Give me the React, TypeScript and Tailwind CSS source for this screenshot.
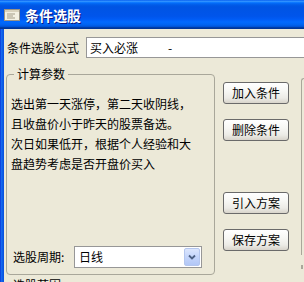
import React from 'react';

const titleBg =
  'bg-[linear-gradient(to_bottom,#0058ee_0%,#3593ff_4%,#288eff_6%,#127dff_8%,#036ffc_10%,#0262ee_14%,#0057e5_20%,#0054e3_24%,#0055eb_56%,#005bf5_66%,#026afe_76%,#0062ef_86%,#0052d6_92%,#0040ab_94%,#003092_100%)]';

const XpButton: React.FC<{ label: string; className?: string }> = ({ label, className = '' }) => (
  <button
    className={`flex h-[22px] w-[66px] items-center justify-center rounded-[3px] border border-[#6a6a6a] bg-[linear-gradient(to_bottom,#ffffff_0%,#f7f7f4_40%,#ecebe6_75%,#d8d4cb_100%)] text-[12px] leading-none text-black ${className}`}
  >
    {label}
  </button>
);

const WindowIcon: React.FC = () => (
  <svg width="16" height="12" viewBox="0 0 16 12" className="shrink-0">
    <rect x="0.5" y="0.5" width="15" height="11" fill="#f3f0e2" stroke="#9a9486" />
    <rect x="1" y="1" width="14" height="2" fill="#d9d2bd" />
    <line x1="3" y1="5" x2="11" y2="5" stroke="#a39c88" />
    <line x1="3" y1="7" x2="9" y2="7" stroke="#a39c88" />
    <line x1="3" y1="9" x2="11" y2="9" stroke="#a39c88" />
  </svg>
);

export default function App() {
  return (
    <div className="flex h-[282px] w-[304px] flex-col overflow-hidden font-['SimSun','Noto_Sans_CJK_SC',sans-serif] text-[12px] text-black">
      {/* Title bar */}
      <div className={`flex h-[29px] shrink-0 items-center gap-[5px] pl-[4px] ${titleBg}`}>
        <WindowIcon />
        <span className="text-[14px] font-bold leading-none text-white [text-shadow:1px_1px_0_#0a1883]">
          条件选股
        </span>
      </div>

      <div className="flex min-h-0 flex-1">
        {/* Window frame */}
        <div className="w-[4px] shrink-0 bg-[linear-gradient(to_right,#0831d9_0%,#166aee_35%,#0a5ae6_70%,#0850dc_100%)]" />

        <div className="flex flex-1 flex-col bg-[#ece9d8]">
          {/* Formula row */}
          <div className="mt-[8px] flex h-[21px] items-center">
            <span className="w-[82px] shrink-0 pl-[3px] leading-none">条件选股公式</span>
            <div className="flex h-[21px] flex-1 items-center border border-r-0 border-[#979797] bg-white pl-[3px] leading-none">
              <span>买入必涨</span>
              <span className="ml-[30px]">-</span>
            </div>
          </div>

          {/* Main area */}
          <div className="mt-[16px] flex items-start">
            <div className="relative ml-[2px] flex h-[201px] w-[209px] shrink-0 flex-col rounded-[4px] border border-[#a9a79a]">
              <span className="absolute -top-[7px] left-[7px] bg-[#ece9d8] px-[3px] leading-[12px]">计算参数</span>
              <div className="pl-[4px] pt-[19px] leading-[20px]">
                <div>选出第一天涨停，第二天收阴线，</div>
                <div>且收盘价小于昨天的股票备选。</div>
                <div>次日如果低开，根据个人经验和大</div>
                <div>盘趋势考虑是否开盘价买入</div>
              </div>
              <div className="mt-auto mb-[6px] flex items-center pl-[6px]">
                <span className="w-[61px] shrink-0 leading-none">选股周期:</span>
                <div className="flex h-[22px] w-[128px] items-center border border-[#979797] bg-white">
                  <span className="flex-1 pl-[4px] leading-none">日线</span>
                  <div className="mr-[1px] flex h-[18px] w-[16px] items-center justify-center rounded-[2px] border border-[#b4c6ee] bg-[linear-gradient(to_bottom,#dce6fd_0%,#c4d5fb_50%,#b2c7f6_100%)]">
                    <svg width="8" height="6" viewBox="0 0 8 6">
                      <path d="M1 1.5 L4 4.5 L7 1.5" fill="none" stroke="#4d6185" strokeWidth="1.8" />
                    </svg>
                  </div>
                </div>
              </div>
            </div>

            {/* Buttons */}
            <div className="ml-[8px] mt-[8px] flex shrink-0 flex-col">
              <XpButton label="加入条件" />
              <XpButton label="删除条件" className="mt-[15px]" />
              <XpButton label="引入方案" className="mt-[51px]" />
              <XpButton label="保存方案" className="mt-[15px]" />
            </div>

            {/* Right panel (cut off) */}
            <div className="ml-[12px] mt-[4px] flex flex-1 flex-col">
              <div className="h-[177px] rounded-tl-[4px] border-l border-t border-[#a9a79a]" />
              <div className="mt-[10px] h-[4px] w-[2px] bg-[#a9a79a]" />
            </div>
          </div>

          {/* Next group (cut off) */}
          <div className="mt-[3px] pl-[9px] leading-[14px]">选股范围</div>
        </div>
      </div>
    </div>
  );
}
